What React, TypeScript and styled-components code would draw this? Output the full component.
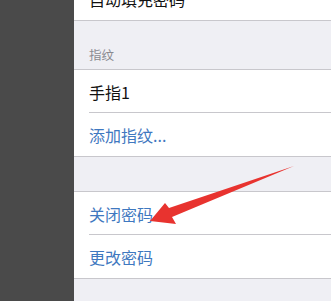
import React from "react";
import styled, { createGlobalStyle } from "styled-components";

const Global = createGlobalStyle`
  html, body { margin: 0; padding: 0; }
  body {
    width: 331px;
    height: 301px;
    overflow: hidden;
    background: #efeff4;
    font-family: "Noto Sans CJK SC", "Noto Sans", sans-serif;
  }
`;

const Page = styled.div`
  position: relative;
  display: flex;
  width: 331px;
  height: 301px;
  overflow: hidden;
`;

const Sidebar = styled.div`
  width: 74px;
  flex: none;
  background: #4a4a4a;
`;

const Content = styled.div`
  flex: 1;
  display: flex;
  flex-direction: column;
  background: #efeff4;
  margin-top: -24px;
`;

const Group = styled.div`
  background: #ffffff;
  border-top: 1px solid #c8c7cc;
  border-bottom: 1px solid #c8c7cc;
`;

const Row = styled.div`
  height: 43px;
  padding-left: 15px;
  display: flex;
`;

const RowInner = styled.div<{ $sep?: boolean }>`
  flex: 1;
  display: flex;
  align-items: center;
  border-bottom: ${(p) => (p.$sep ? "1px solid #c8c7cc" : "none")};
  font-size: 16px;
  color: ${(p) => "#000"};
`;

const Label = styled.span<{ $link?: boolean }>`
  font-size: 16px;
  letter-spacing: 0;
  color: ${(p) => (p.$link ? "#3f78c0" : "#111111")};
  margin-top: 1px;
`;

const Gap = styled.div<{ $h: number }>`
  height: ${(p) => p.$h}px;
`;

const Header = styled.div`
  height: 48px;
  box-sizing: border-box;
  padding: 0 0 5px 15px;
  display: flex;
  align-items: flex-end;
  font-size: 12.5px;
  color: #8a8a8f;
`;

const ArrowLayer = styled.svg`
  position: absolute;
  left: 0;
  top: 0;
  pointer-events: none;
`;

type Item = { text: string; link?: boolean };

function Section({ items }: { items: Item[] }) {
  return (
    <Group>
      {items.map((it, i) => (
        <Row key={it.text}>
          <RowInner $sep={i < items.length - 1}>
            <Label $link={it.link}>{it.text}</Label>
          </RowInner>
        </Row>
      ))}
    </Group>
  );
}

export default function App() {
  return (
    <>
      <Global />
      <Page>
        <Sidebar />
        <Content>
          <Section items={[{ text: "自动填充密码" }]} />
          <Header>指纹</Header>
          <Section
            items={[
              { text: "手指1" },
              { text: "添加指纹...", link: true },
            ]}
          />
          <Gap $h={34} />
          <Section
            items={[
              { text: "关闭密码", link: true },
              { text: "更改密码", link: true },
            ]}
          />
        </Content>
        <ArrowLayer width="331" height="301" viewBox="0 0 331 301">
          <polygon
            points="150,221 165,203 169,208 294,166 172,217 176,224"
            fill="#e8332f"
          />
        </ArrowLayer>
      </Page>
    </>
  );
}
